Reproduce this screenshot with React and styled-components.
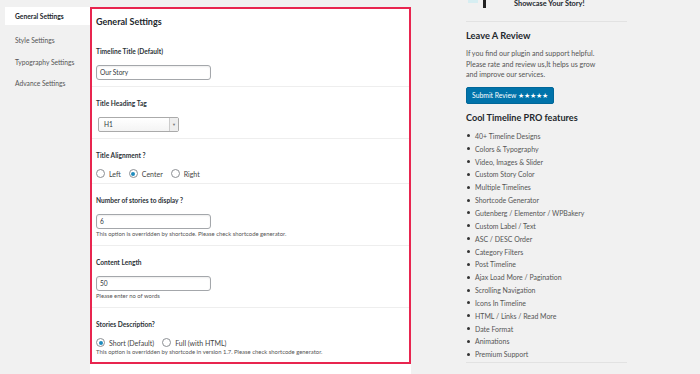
import React from "react";
import styled, { createGlobalStyle } from "styled-components";

const GlobalStyle = createGlobalStyle`
  html, body {
    margin: 0;
    padding: 0;
    background: #f1f1f1;
    font-family: Lato, "Open Sans", sans-serif;
    color: #444;
    overflow: hidden;
  }
`;

const Page = styled.div`
  display: flex;
  align-items: flex-start;
  padding: 7px 0 0 5px;
  height: 374px;
  box-sizing: border-box;
`;

const Nav = styled.ul`
  list-style: none;
  margin: 0;
  padding: 0;
  width: 85px;
  flex-shrink: 0;
`;

const Tab = styled.li`
  height: ${(p) => (p.$active ? "18px" : "21.5px")};
  line-height: ${(p) => (p.$active ? "18px" : "21.5px")};
  padding-left: 10px;
  font-size: 6.7px;
  white-space: nowrap;
  font-weight: ${(p) => (p.$active ? 700 : 400)};
  color: ${(p) => (p.$active ? "#23282d" : "#555")};
  background: ${(p) => (p.$active ? "#fff" : "transparent")};
  margin-bottom: ${(p) => (p.$active ? "5px" : "0")};
`;

const Main = styled.div`
  width: 321px;
  flex-shrink: 0;
  background: #fff;
`;

const Highlight = styled.div`
  border: 2px solid #e8254f;
  box-sizing: border-box;
`;

const Heading = styled.h2`
  margin: 0;
  padding: 6px 4px 0;
  height: 26px;
  box-sizing: border-box;
  font-size: 9px;
  line-height: 14px;
  font-weight: 700;
  color: #23282d;
`;

const Section = styled.div`
  padding: 11px 4px ${(p) => (p.$tight ? "5px" : "6px")};
  border-bottom: ${(p) => (p.$last ? "none" : "1px solid #eee")};
`;

const Label = styled.div`
  font-size: 6.6px;
  line-height: 10px;
  font-weight: 700;
  color: #2c3338;
  margin-bottom: 9px;
`;

const TextInput = styled.div`
  width: 115px;
  height: 15px;
  box-sizing: border-box;
  border: 1px solid #a4a7ab;
  border-radius: 3px;
  padding-left: 3px;
  font-size: 6.6px;
  line-height: 13px;
  color: #32373c;
  box-shadow: inset 0 1px 2px rgba(0, 0, 0, 0.07);
`;

const Select = styled.div`
  display: flex;
  width: 81px;
  height: 15px;
  margin-left: 2px;
  box-sizing: border-box;
  border: 1px solid #aaa;
  border-radius: 2px;
  background: linear-gradient(#fff, #f4f4f4);
  font-size: 6.6px;
  line-height: 13px;
  color: #32373c;
`;

const SelectValue = styled.span`
  flex: 1;
  padding-left: 5px;
`;

const SelectArrow = styled.span`
  width: 8px;
  border-left: 1px solid #ccc;
  background: #eee;
  display: flex;
  align-items: center;
  justify-content: center;
  font-size: 4px;
  color: #777;
`;

const RadioRow = styled.div`
  display: flex;
  align-items: center;
  height: 9px;
  gap: 8px;
`;

const RadioItem = styled.label`
  display: flex;
  align-items: center;
  gap: 4px;
  font-size: 7px;
  color: #444;
  white-space: nowrap;
`;

const Circle = styled.span`
  width: 9px;
  height: 9px;
  box-sizing: border-box;
  border: 1px solid #8c8f94;
  border-radius: 50%;
  display: flex;
  align-items: center;
  justify-content: center;
  background: #fff;

  &::after {
    content: "";
    width: 4px;
    height: 4px;
    border-radius: 50%;
    background: ${(p) => (p.$checked ? "#1e8cbe" : "transparent")};
  }
`;

const Help = styled.div`
  font-size: 5.9px;
  line-height: 10px;
  color: #555;
  white-space: nowrap;
`;

const Rest = styled.div`
  height: 20px;
`;

const Side = styled.div`
  margin-left: 55px;
  width: 161px;
  flex-shrink: 0;
  margin-top: -7px;
`;

const LogoRow = styled.div`
  display: flex;
  align-items: flex-start;
  height: 8px;
  padding-bottom: 13px;
  border-bottom: 1px solid #e2e2e2;
`;

const Tagline = styled.span`
  margin-left: 26px;
  font-size: 7.4px;
  line-height: 8px;
  font-weight: 700;
  color: #23282d;
  white-space: nowrap;
`;

const SideTitle = styled.h3`
  margin: ${(p) => p.$margin};
  font-size: ${(p) => p.$size};
  line-height: 14px;
  font-weight: 700;
  color: #23282d;
  white-space: nowrap;
`;

const Para = styled.p`
  margin: 6px 0 0;
  font-size: 7.1px;
  line-height: 10.5px;
  color: #555;
  white-space: nowrap;
`;

const Button = styled.div`
  margin-top: 6px;
  width: 88px;
  height: 17px;
  box-sizing: border-box;
  background: #0073aa;
  border: 1px solid #006799;
  border-radius: 2px;
  color: #fff;
  font-size: 6.8px;
  line-height: 15px;
  text-align: center;
  white-space: nowrap;
`;

const Features = styled.ul`
  margin: 5px 0 0;
  padding: 0 0 1px;
  list-style: none;
  border-bottom: 1px solid #e2e2e2;
`;

const Feature = styled.li`
  display: flex;
  align-items: center;
  height: 12.85px;
  font-size: 6.95px;
  color: #555;
  white-space: nowrap;

  &::before {
    content: "";
    width: 3px;
    height: 3px;
    border-radius: 50%;
    background: #333;
    margin: 0 5px 0 1px;
  }
`;

const features = [
  "40+ Timeline Designs",
  "Colors & Typography",
  "Video, Images & Slider",
  "Custom Story Color",
  "Multiple Timelines",
  "Shortcode Generator",
  "Gutenberg / Elementor / WPBakery",
  "Custom Label / Text",
  "ASC / DESC Order",
  "Category Filters",
  "Post Timeline",
  "Ajax Load More / Pagination",
  "Scrolling Navigation",
  "Icons In Timeline",
  "HTML / Links / Read More",
  "Date Format",
  "Animations",
  "Premium Support",
];

const Radio = ({ checked, children }) => (
  <RadioItem>
    <Circle $checked={checked} />
    {children}
  </RadioItem>
);

const App = () => {
  return (
    <>
      <GlobalStyle />
      <Page>
        <Nav>
          <Tab $active>General Settings</Tab>
          <Tab>Style Settings</Tab>
          <Tab>Typography Settings</Tab>
          <Tab>Advance Settings</Tab>
        </Nav>

        <Main>
          <Highlight>
            <Heading>General Settings</Heading>
            <Section>
              <Label>Timeline Title (Default)</Label>
              <TextInput>Our Story</TextInput>
            </Section>
            <Section>
              <Label>Title Heading Tag</Label>
              <Select>
                <SelectValue>H1</SelectValue>
                <SelectArrow>▼</SelectArrow>
              </Select>
            </Section>
            <Section $tight>
              <Label>Title Alignment ?</Label>
              <RadioRow>
                <Radio>Left</Radio>
                <Radio checked>Center</Radio>
                <Radio>Right</Radio>
              </RadioRow>
            </Section>
            <Section>
              <Label>Number of stories to display ?</Label>
              <TextInput>6</TextInput>
              <Help>This option is overridden by shortcode. Please check shortcode generator.</Help>
            </Section>
            <Section>
              <Label>Content Length</Label>
              <TextInput>50</TextInput>
              <Help>Please enter no of words</Help>
            </Section>
            <Section $tight $last>
              <Label>Stories Description?</Label>
              <RadioRow>
                <Radio checked>Short (Default)</Radio>
                <Radio>Full (with HTML)</Radio>
              </RadioRow>
              <Help>
                This option is overridden by shortcode in version 1.7. Please check shortcode generator.
              </Help>
            </Section>
          </Highlight>
          <Rest />
        </Main>

        <Side>
          <LogoRow>
            <svg width="22" height="8" viewBox="0 0 22 8">
              <rect x="2" y="0" width="10" height="3" fill="#d7eef2" />
              <rect x="17" y="0" width="3" height="8" fill="#222" />
            </svg>
            <Tagline>Showcase Your Story!</Tagline>
          </LogoRow>
          <SideTitle $margin="7px 0 0" $size="9.3px">Leave A Review</SideTitle>
          <Para>
            If you find our plugin and support helpful.
            <br />
            Please rate and review us,It helps us grow
            <br />
            and improve our services.
          </Para>
          <Button>Submit Review ★★★★★</Button>
          <SideTitle $margin="7px 0 0" $size="9.1px">Cool Timeline PRO features</SideTitle>
          <Features>
            {features.map((f) => (
              <Feature key={f}>{f}</Feature>
            ))}
          </Features>
        </Side>
      </Page>
    </>
  );
};

export default App;
